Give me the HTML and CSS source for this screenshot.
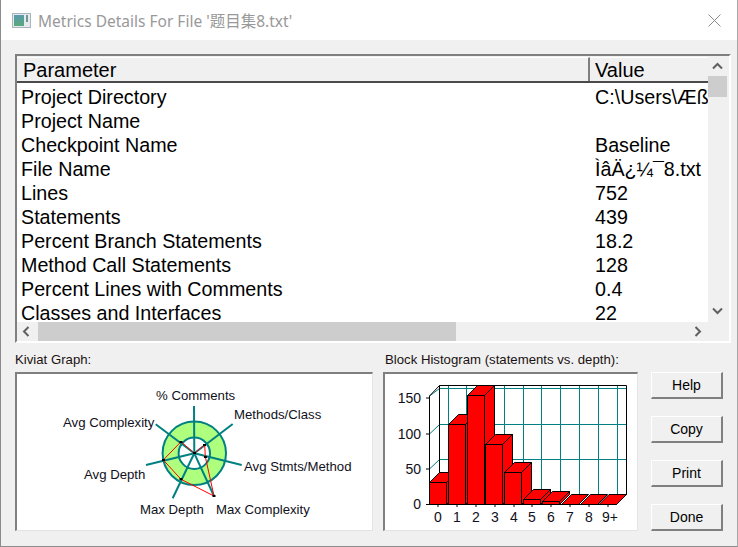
FILE: index.html
```html
<!DOCTYPE html>
<html lang="en">
<head>
  <meta charset="UTF-8">
  <meta name="viewport" content="width=device-width, initial-scale=1.0">
  <title>Metrics Details</title>
  <link rel="stylesheet" href="styles.css">
</head>
<body>
  <div class="window">
    <div class="titlebar">
      <svg class="title-icon" viewBox="0 0 19 15">
        <defs>
          <linearGradient id="iconFill" x1="0" y1="0" x2="0" y2="1">
            <stop offset="0" stop-color="#5a9ab0"/>
            <stop offset="1" stop-color="#58a878"/>
          </linearGradient>
        </defs>
        <rect x="0.5" y="0.5" width="18" height="14" fill="#e6eaee" stroke="#a8b4bc"/>
        <rect x="2" y="2" width="10" height="11" fill="url(#iconFill)"/>
        <rect x="14" y="2" width="2" height="7" fill="#6a9a90"/>
      </svg>
      <span class="title-text">Metrics Details For File '题目集8.txt'</span>
      <svg class="close-icon" viewBox="0 0 13 13">
        <path d="M0.5 0.5L12.5 12.5M12.5 0.5L0.5 12.5" stroke="#8a8a8a" fill="none"/>
      </svg>
    </div>

    <div class="content">
      <div class="list">
        <div class="list-main">
          <div class="list-view">
            <div class="list-head">
              <div class="head-cell head-name">Parameter</div>
              <div class="head-cell head-value">Value</div>
            </div>
            <div class="list-rows">
              <div class="row"><span class="name">Project Directory</span><span class="value">C:\Users\Æß</span></div>
              <div class="row"><span class="name">Project Name</span><span class="value"></span></div>
              <div class="row"><span class="name">Checkpoint Name</span><span class="value">Baseline</span></div>
              <div class="row"><span class="name">File Name</span><span class="value">ÌâÄ¿¼¯8.txt</span></div>
              <div class="row"><span class="name">Lines</span><span class="value">752</span></div>
              <div class="row"><span class="name">Statements</span><span class="value">439</span></div>
              <div class="row"><span class="name">Percent Branch Statements</span><span class="value">18.2</span></div>
              <div class="row"><span class="name">Method Call Statements</span><span class="value">128</span></div>
              <div class="row"><span class="name">Percent Lines with Comments</span><span class="value">0.4</span></div>
              <div class="row"><span class="name">Classes and Interfaces</span><span class="value">22</span></div>
            </div>
          </div>
          <div class="vscroll">
            <svg class="arrow" viewBox="0 0 19 19"><path d="M5 11.5L9.5 7L14 11.5" /></svg>
            <div class="vthumb"></div>
            <div class="spacer"></div>
            <svg class="arrow arrow-down" viewBox="0 0 19 19"><path d="M5 7.5L9.5 12L14 7.5" /></svg>
          </div>
        </div>
        <div class="hscroll">
          <svg class="arrow arrow-left" viewBox="0 0 19 19"><path d="M11.5 5L7 9.5L11.5 14" /></svg>
          <div class="hthumb"></div>
          <div class="spacer"></div>
          <svg class="arrow" viewBox="0 0 19 19"><path d="M7.5 5L12 9.5L7.5 14" /></svg>
          <div class="corner"></div>
        </div>
      </div>

      <div class="bottom">
        <div class="graph graph-kiviat">
          <div class="graph-label">Kiviat Graph:</div>
          <div class="graph-box">
            <!-- viewBox is in window coordinates -->
            <svg class="chart" viewBox="17 374 355 156">
              <circle class="ring-fill" cx="194.3" cy="453.3" r="31.7"/>
              <circle class="ring-hole" cx="194.3" cy="453.3" r="15.7"/>
              <g class="spokes">
                <path d="M194.3 453.3L194 406"/>
                <path d="M194.3 453.3L232.7 424"/>
                <path d="M194.3 453.3L241.7 465"/>
                <path d="M194.3 453.3L214 496"/>
                <path d="M194.3 453.3L172.7 498.3"/>
                <path d="M194.3 453.3L146 465"/>
                <path d="M194.3 453.3L155.7 424.3"/>
              </g>
              <polygon class="kiviat-data" points="194.3,453.3 204.7,444.7 205.3,456.7 214,496 181,479.3 163.3,460 181,441.7"/>
              <g class="marks">
                <rect x="193" y="452" width="3" height="2"/>
                <rect x="203" y="444" width="3" height="2"/>
                <rect x="204" y="456" width="3" height="2"/>
                <rect x="212.5" y="495" width="3" height="2"/>
                <rect x="179.5" y="478" width="3" height="2"/>
                <rect x="162" y="459" width="3" height="2"/>
                <rect x="179.5" y="441" width="3" height="2"/>
              </g>
              <g class="chart-text">
                <text x="156" y="400">% Comments</text>
                <text x="234" y="419">Methods/Class</text>
                <text x="63" y="427">Avg Complexity</text>
                <text x="244" y="471">Avg Stmts/Method</text>
                <text x="84" y="479">Avg Depth</text>
                <text x="140" y="514">Max Depth</text>
                <text x="216" y="514">Max Complexity</text>
              </g>
            </svg>
          </div>
        </div>

        <div class="graph graph-hist">
          <div class="graph-label">Block Histogram (statements vs. depth):</div>
          <div class="graph-box">
            <svg class="chart" viewBox="385 374 252 156">
              <g class="grid">
                <path d="M439.5 388.5H626.5M439.5 424.5H626.5M439.5 459.5H626.5"/>
                <path d="M448.5 385.5V495M466.5 385.5V495M485.5 385.5V495M504.5 385.5V495M523.5 385.5V495M541.5 385.5V495M560.5 385.5V495M579.5 385.5V495M598.5 385.5V495M617.5 385.5V495"/>
                <path d="M429.5 396L439.5 388.5M429.5 434L439.5 424.5M429.5 469L439.5 459.5"/>
              </g>
              <path class="axes" d="M429.5 396V504.5H616.5L626.5 494.5V385.5H439.5V494.5M429.5 396L439.5 385.5M426 398H429.5M426 434H429.5M426 469H429.5M426 504.5H429.5M438 504.5V507M457 504.5V507M476 504.5V507M495 504.5V507M514 504.5V507M532 504.5V507M551 504.5V507M570 504.5V507M589 504.5V507M608 504.5V507"/>

              <g class="bars">
                <polygon points="429.5,482.5 439.5,472.5 456.5,472.5 446.5,482.5"/>
                <polygon points="446.5,482.5 456.5,472.5 456.5,494.5 446.5,504.5"/>
                <rect x="429.5" y="482.5" width="17" height="22"/>

                <polygon points="448.5,424.5 458.5,414.5 475.5,414.5 465.5,424.5"/>
                <polygon points="465.5,424.5 475.5,414.5 475.5,494.5 465.5,504.5"/>
                <rect x="448.5" y="424.5" width="17" height="80"/>

                <polygon points="467.5,395.5 477.5,385.5 494.5,385.5 484.5,395.5"/>
                <polygon points="484.5,395.5 494.5,385.5 494.5,494.5 484.5,504.5"/>
                <rect x="467.5" y="395.5" width="17" height="109"/>

                <polygon points="485.5,444.5 495.5,434.5 512.5,434.5 502.5,444.5"/>
                <polygon points="502.5,444.5 512.5,434.5 512.5,494.5 502.5,504.5"/>
                <rect x="485.5" y="444.5" width="17" height="60"/>

                <polygon points="504.5,472.5 514.5,462.5 531.5,462.5 521.5,472.5"/>
                <polygon points="521.5,472.5 531.5,462.5 531.5,494.5 521.5,504.5"/>
                <rect x="504.5" y="472.5" width="17" height="32"/>

                <polygon points="523.5,499.5 533.5,489.5 550.5,489.5 540.5,499.5"/>
                <polygon points="540.5,499.5 550.5,489.5 550.5,494.5 540.5,504.5"/>
                <rect x="523.5" y="499.5" width="17" height="5"/>

                <polygon points="542.5,501.5 552.5,491.5 569.5,491.5 559.5,501.5"/>
                <polygon points="559.5,501.5 569.5,491.5 569.5,494.5 559.5,504.5"/>
                <rect x="542.5" y="501.5" width="17" height="3"/>

                <polygon points="561.5,504.5 571.5,494.5 588.5,494.5 578.5,504.5"/>
                <polygon points="580.5,504.5 590.5,494.5 607.5,494.5 597.5,504.5"/>
                <polygon points="599,504.5 609,494.5 626.5,494.5 616.5,504.5"/>
              </g>

              <g class="chart-text axis-y">
                <text x="421" y="403">150</text>
                <text x="421" y="439">100</text>
                <text x="421" y="474">50</text>
                <text x="421" y="509">0</text>
              </g>
              <g class="chart-text axis-x">
                <text x="438" y="522">0</text>
                <text x="457" y="522">1</text>
                <text x="476" y="522">2</text>
                <text x="495" y="522">3</text>
                <text x="514" y="522">4</text>
                <text x="532" y="522">5</text>
                <text x="551" y="522">6</text>
                <text x="570" y="522">7</text>
                <text x="589" y="522">8</text>
                <text x="610" y="522">9+</text>
              </g>
            </svg>
          </div>
        </div>

        <div class="buttons">
          <button class="btn">Help</button>
          <button class="btn">Copy</button>
          <button class="btn">Print</button>
          <button class="btn">Done</button>
        </div>
      </div>
    </div>
  </div>
</body>
</html>
```

FILE: styles.css
```css
* {
  margin: 0;
  padding: 0;
  box-sizing: border-box;
}
html, body {
  width: 738px;
  height: 547px;
  overflow: hidden;
  background: #f0f0f0;
}
body {
  font-family: "Liberation Sans", Arial, sans-serif;
  color: #000;
}
.window {
  display: flex;
  flex-direction: column;
  width: 738px;
  height: 547px;
  border-left: 1px solid #8c8c8c;
  border-right: 1px solid #a8a8a8;
  border-bottom: 1px solid #8c8c8c;
  background: #f0f0f0;
}

/* title bar */
.titlebar {
  display: flex;
  align-items: center;
  flex: none;
  height: 40px;
  padding: 0 16px 0 11px;
  background: #fff;
}
.title-icon {
  width: 19px;
  height: 15px;
  flex: none;
}
.title-text {
  margin-left: 7px;
  font-family: "Noto Sans", "Noto Sans CJK SC", sans-serif;
  font-size: 15.5px;
  color: #999;
}
.close-icon {
  width: 13px;
  height: 13px;
  margin-left: auto;
}

.content {
  flex: 1;
  padding: 14px 6px 0 14px;
}

/* list with the scrollbars */
.list {
  display: flex;
  flex-direction: column;
  width: 716px;
  height: 289px;
  border-top: 2px solid #7f7f7f;
  border-left: 2px solid #7f7f7f;
  border-right: 2px solid #fff;
  border-bottom: 2px solid #fff;
}
.list-main {
  display: flex;
  height: 266px;
  padding-top: 1px;
  background: #f0f0f0;
}
.list-view {
  width: 691px;
  overflow: hidden;
  background: #fff;
}
.list-head {
  display: flex;
  height: 26px;
  background: #f0f0f0;
  border-bottom: 2px solid #4a4a4a;
  font-size: 20px;
}
.head-cell {
  padding: 0 0 0 6px;
  line-height: 25px;
  border-top: 1px solid #fff;
}
.head-name {
  width: 573px;
  border-right: 2px solid #7f7f7f;
}
.head-value {
  flex: 1;
  padding-left: 5px;
}
.list-rows {
  padding-top: 2px;
}
.row {
  display: flex;
  height: 24px;
  line-height: 24px;
  font-size: 19.7px;
  white-space: nowrap;
}
.name {
  width: 578px;
  flex: none;
  padding-left: 4px;
}
.value {
  flex: 1;
  overflow: hidden;
}

/* scrollbars */
.vscroll {
  display: flex;
  flex-direction: column;
  width: 19px;
  background: #f0f0f0;
}
.hscroll {
  display: flex;
  height: 19px;
  background: #f0f0f0;
}
.spacer {
  flex: 1;
}
.arrow {
  display: block;
  width: 19px;
  height: 19px;
  flex: none;
}
.arrow path {
  fill: none;
  stroke: #606060;
  stroke-width: 2;
}
.arrow-down {
  margin-bottom: 2px;
}
.arrow-left {
  margin-right: 2px;
}
.vthumb {
  height: 21px;
  background: #cdcdcd;
}
.hthumb {
  width: 418px;
  background: #cdcdcd;
}
.corner {
  width: 22px;
  flex: none;
}

/* bottom part */
.bottom {
  display: flex;
  margin-top: 6px;
}
.graph-kiviat {
  width: 368px;
}
.graph-hist {
  width: 255px;
}
.graph-label {
  height: 23px;
  font-size: 13.2px;
  line-height: 21px;
  color: #1a1010;
}
.graph-hist .graph-label {
  padding-left: 2px;
}
.graph-kiviat .graph-box {
  width: 358px;
}
.graph-hist .graph-box {
  width: 255px;
}
.graph-box {
  height: 159px;
  border-top: 2px solid #7f7f7f;
  border-left: 2px solid #7f7f7f;
  border-right: 1px solid #e4e4e4;
  border-bottom: 1px solid #e4e4e4;
  background: #fff;
}
.chart {
  display: block;
  width: 100%;
  height: 156px;
}
.chart-text text {
  font-family: "Liberation Sans", Arial, sans-serif;
  font-size: 13.2px;
  fill: #101020;
}
.axis-y text {
  font-size: 14px;
  text-anchor: end;
}
.axis-x text {
  font-size: 14px;
  text-anchor: middle;
}

/* kiviat */
.ring-fill {
  fill: #afff7f;
  stroke: #008080;
  stroke-width: 2;
}
.ring-hole {
  fill: #fff;
  stroke: #008080;
  stroke-width: 2;
}
.spokes path {
  stroke: #008080;
  stroke-width: 2;
  fill: none;
}
.kiviat-data {
  fill: none;
  stroke: #f00;
  stroke-width: 1;
}
.marks rect {
  fill: #000;
}

/* histogram */
.grid path {
  stroke: #008080;
  stroke-width: 1;
  fill: none;
}
.axes {
  stroke: #000;
  stroke-width: 1;
  fill: none;
}
.bars polygon, .bars rect {
  fill: #f00;
  stroke: #000;
  stroke-width: 1;
}

/* buttons */
.buttons {
  display: flex;
  flex-direction: column;
  gap: 17px;
  margin-left: 13px;
  padding-top: 23px;
}
.btn {
  width: 72px;
  height: 27px;
  font-family: "Liberation Sans", Arial, sans-serif;
  font-size: 14px;
  background: #f0f0f0;
  border-top: 1px solid #fff;
  border-left: 1px solid #fff;
  border-right: 2px solid #808080;
  border-bottom: 2px solid #808080;
  color: #000;
}
```
